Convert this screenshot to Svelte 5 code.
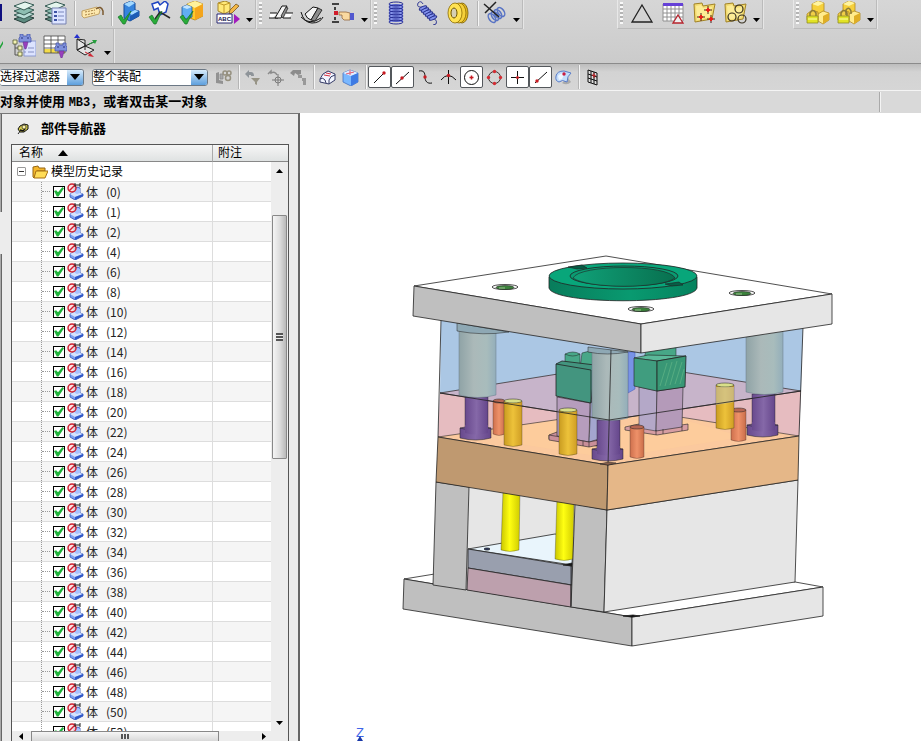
<script lang="ts">
	const bodies = [0, 1, ...Array.from({ length: 26 }, (_, i) => (i + 1) * 2)];

	let checked = $state(bodies.map(() => true));
	let filter = $state('选择过滤器');
	let scope = $state('整个装配');

	const holes = [
		[505, 287],
		[742, 293],
		[641, 309]
	];

	const goldPins = [
		[504, 401, 44],
		[559, 410, 44],
		[716, 385, 43]
	];

	const redPins = [
		[493, 401, 33, 12],
		[630, 427, 30, 14],
		[731, 410, 30, 15]
	];

	const guides = [
		{ x: 459, top: 327, w: 37, h: 68, px: 465, py: 397, ph: 35 },
		{ x: 592, top: 350, w: 36, h: 68, px: 597, py: 420, ph: 33 },
		{ x: 746, top: 330, w: 37, h: 62, px: 752, py: 394, ph: 35 }
	];
</script>

{#snippet more()}
	<button class="more" aria-label="More"><svg width="7" height="4" viewBox="0 0 7 4"><path d="M0 0h7L3.500 4z" /></svg></button>
{/snippet}

{#snippet layers()}
	<path d="M2 18l11-4 9 3-10 5z" fill="#5d8b80" stroke="#253c39" />
	<path d="M2 14l11-4 9 3-10 5z" fill="#b9ddd7" stroke="#365b54" />
	<path d="M2 10l11-4 9 3-10 5z" fill="#8dbeb2" stroke="#365b54" />
	<path d="M2 5l11-4 9 3-10 5z" fill="#e4f5ee" stroke="#365b54" />
{/snippet}

{#snippet folder()}
	<path d="M2 3l8-1 1 3 12-2-3 15-17 3z" fill="#f3dc72" stroke="#a28326" />
	<path d="M4 5l5-1 2 3 9-1-2 10-13 3z" fill="#fff2a5" opacity=".7" />
{/snippet}

{#snippet cubes()}
	<path d="M6 3l6-3 6 2v8l-6 4-6-3z" fill="#f6d03c" stroke="#b08a22" stroke-width=".8" />
	<path d="M6 3l6 2 6-3-6-2z" fill="#fff4a0" />
	<path d="M12 13l5-3 6 2v7l-6 4-5-3z" fill="#ffeb8c" stroke="#b08a22" stroke-width=".8" />
	<path d="M17 15l6-3v7l-6 4z" fill="#dfae25" />
	<path d="M1 13l5-4 6 2v8H1z" fill="#f0ce48" stroke="#b08a22" stroke-width=".8" />
	<path d="M4 15v-3q3-5 6 0v3" fill="none" stroke="#8b7a37" stroke-width="1.500" />
	<path d="M1 15h11v7H1z" fill="#e2e325" stroke="#8f8e26" stroke-width=".8" />
	<path d="M2 18h9" stroke="#fbffaf" />
{/snippet}

{#snippet tick()}
	<path d="M1 16l3-2 3 5 7-9-6 13H6z" fill="#29ac38" stroke="#16732a" stroke-width=".7" />
{/snippet}

{#snippet clamp()}
	<path d="M8 0h3v2h4V0h3v3l1 1v4H7V4l1-1z" fill="#7f91dc" stroke="#4a58ab" stroke-width=".8" />
	<path d="M9 4h2M15 4h2" stroke="#27307d" />
	<path d="M11 8h5l-1 4-1 3h-1l-1-3z" fill="#9a3fbe" stroke="#6a3494" stroke-width=".6" />
{/snippet}

{#snippet bodyIcon()}
	<svg class="body-icon" width="17" height="17" viewBox="0 0 17 17">
		<path d="M3 11l4-2V5l4-1 2 1v5l3 1v2l-8 4-5-3z" fill="#7ea0f2" stroke="#2f50b4" stroke-width=".8" />
		<path d="M3 11l4-2 3 1 3 0 3 1-8 3z" fill="#d6e4ff" />
		<path d="M8 6l3-1 2 1v4l-3 1-2-1z" fill="#a7c3ff" />
		<path d="M8 14l8-3v2l-8 4z" fill="#3158c8" />
		<circle cx="5" cy="5" r="4" fill="#f8dde0" fill-opacity=".8" stroke="#d32231" stroke-width="1.500" />
		<path d="M2 8l6-6" stroke="#d32231" stroke-width="1.500" />
		<path d="M8 2h5M8 0v4M13 0v4" stroke="#202020" />
	</svg>
{/snippet}

<div class="app">
	<header class="toolbars">
		<div class="toolbar">
			<div class="group first">
				<span class="sliver"><svg width="3" height="18" viewBox="0 0 3 18"><path d="M0 1h2M1 1v15M0 16h2" stroke="#101080" stroke-width="2" /></svg></span>
				<button aria-label="Layer settings"><svg width="24" height="24" viewBox="0 0 24 24">{@render layers()}</svg></button>
				<button aria-label="Layer categories">
					<svg width="24" height="24" viewBox="0 0 24 24">
						{@render layers()}
						<path d="M9 7h14v16H9z" fill="#dce4ff" stroke="#7681b1" />
						<path d="M11 10h3v2h-3zM11 14h3v2h-3zM11 18h3v2h-3z" fill="#3d53a5" />
						<path d="M15 11h6M15 15h6M15 19h6" stroke="#7885bb" />
					</svg>
				</button>
				<span class="sep"></span>
				<button aria-label="Name tag">
					<svg width="24" height="24" viewBox="0 0 24 24">
						<path d="M2 10l15-4 3 3-1 4-15 4-2-2z" fill="#fde8ae" stroke="#b8934f" stroke-width=".8" />
						<path d="M5 11l10-2M5 14l10-2" stroke="#a88345" stroke-dasharray="2 1" />
						<path d="M16 8q5-4 7 2v4" fill="none" stroke="#7b5a30" stroke-width="1.500" />
					</svg>
				</button>
				<span class="sep"></span>
				<button aria-label="Extrude body">
					<svg width="24" height="24" viewBox="0 0 24 24">
						<path d="M7 3l7-3 4 2v7l4 1v5l-9 5-6-3z" fill="#3684dd" stroke="#174a96" />
						<path d="M7 3l7-3 4 2-6 4zM12 12l6-3 4 1-7 4z" fill="#a4d9ff" />
						<path d="M13 15l9-5v5l-9 5z" fill="#1c5cb5" />
						{@render tick()}
					</svg>
				</button>
				<button aria-label="Sketch profile">
					<svg width="24" height="24" viewBox="0 0 24 24">
						<path d="M4 3l6-2 2 3 5-4 3 3-2 8-6 3-2-7-4 2z" fill="#fff" stroke="#1f44c2" stroke-width="1.500" />
						<path d="M7 18l5-7 10 6" fill="none" stroke="#282828" stroke-width="1.500" />
						{@render tick()}
					</svg>
				</button>
				<button aria-label="Wrap block">
					<svg width="24" height="24" viewBox="0 0 24 24">
						<path d="M8 3l8-3 8 3v12l-8 4-8-3z" fill="#ffc928" stroke="#b0801c" stroke-width=".8" />
						<path d="M8 3l8-3 8 3-8 4z" fill="#fff19b" />
						<path d="M16 7l8-4v12l-8 4z" fill="#f4a51c" />
						<path d="M3 6l5-2 5 2v10l-5 2-5-2z" fill="#61aef2" stroke="#1e5699" stroke-width=".8" />
						<path d="M3 6l5-2 5 2-5 2z" fill="#c4e5ff" />
						{@render tick()}
					</svg>
				</button>
				<span class="sep"></span>
				<button aria-label="Edit text feature">
					<svg width="24" height="24" viewBox="0 0 24 24">
						<path d="M2 2l7-2 5 2v8l-6 3-6-3z" fill="#ffe979" stroke="#a3852a" />
						<path d="M2 2l6 2 6-2M8 4v8" fill="none" stroke="#c49a28" />
						<path d="M20 3l3 2-7 7-3 1 1-4z" fill="#f3b847" stroke="#78551d" stroke-width=".8" />
						<path d="M1 13h15v9H1z" fill="#fff" stroke="#282872" />
						<text x="2" y="20" font-size="6" font-weight="700" fill="#161650">ABC</text>
						<path d="M18 13l6 5-6 5z" fill="#a21bbd" />
					</svg>
				</button>
				{@render more()}
			</div>

			<div class="group">
				<span class="grip"></span>
				<button aria-label="Bend sheet">
					<svg width="24" height="24" viewBox="0 0 24 24">
						<path d="M1 12h7l-4 5H1zM16 12h8l-4 5h-7z" fill="#fff" />
						<path d="M1 12h7M0 17h9M17 12h7M14 17h8" stroke="#111" />
						<path d="M6 17l7-12h5l-6 12z" fill="#f4f4f4" stroke="#111" />
						<path d="M12 15l5-9 2 1-5 10z" fill="#8c8c8c" stroke="#111" stroke-width=".7" />
					</svg>
				</button>
				<button aria-label="Bend curved sheet">
					<svg width="24" height="24" viewBox="0 0 24 24">
						<path d="M1 11q3 11 11 11 8 0 11-6M1 16q8 9 20 1" fill="none" stroke="#111" />
						<path d="M5 13l8-7 5 1-7 12q-4-1-6-6z" fill="#f4f4f4" stroke="#111" />
						<path d="M11 19l7-12 4 2-7 11z" fill="#8c8c8c" stroke="#111" stroke-width=".8" />
					</svg>
				</button>
				<button aria-label="Pick station">
					<svg width="24" height="24" viewBox="0 0 24 24">
						<path d="M1 3h7M1 21h7" stroke="#111" stroke-width="1.500" />
						<path d="M4 6v14" stroke="#111" stroke-width="1.500" stroke-dasharray="3 2" />
						<path d="M3 10h4v4H3z" fill="#d11d2c" />
						<path d="M8 11h7l4 1v7h-6l-2-2v-3H8z" fill="#f9d9a0" stroke="#94683d" stroke-width=".8" />
						<path d="M19 12h4v7h-4z" fill="#5258cf" />
					</svg>
				</button>
				{@render more()}
			</div>

			<div class="group">
				<span class="grip"></span>
				<button aria-label="Coil spring">
					<svg width="24" height="24" viewBox="0 0 24 24">
						<path d="M5 3h14v18H5z" fill="#8896ec" />
						{#each [3, 6, 9, 12, 15, 18, 21] as y}
							<ellipse cx="12" cy={y} rx="7" ry="2" fill="none" stroke="#272e94" />
						{/each}
					</svg>
				</button>
				<button aria-label="Tension spring">
					<svg width="24" height="24" viewBox="0 0 24 24">
						<path d="M8 6Q1 7 3 2q3-3 5 1M17 18q6 0 4 5l-3 1" fill="none" stroke="#353d95" />
						{#each [0, 1, 2, 3, 4, 5] as i}
							<ellipse cx={8 + i * 2} cy={7 + i * 2} rx="4" ry="1.500" transform="rotate(-25 {8 + i * 2} {7 + i * 2})" fill="#8292ee" stroke="#262f8b" />
						{/each}
					</svg>
				</button>
				<button aria-label="Die ring">
					<svg width="24" height="24" viewBox="0 0 24 24">
						<ellipse cx="16" cy="12" rx="6" ry="10" fill="#e6bb22" stroke="#765b00" stroke-width=".8" />
						<ellipse cx="13" cy="12" rx="7" ry="10" fill="#f5d03a" stroke="#8b6b00" stroke-width=".8" />
						<ellipse cx="9" cy="12" rx="7" ry="10" fill="#ffe252" stroke="#8b6b00" stroke-width=".8" />
						<ellipse cx="8" cy="12" rx="3" ry="5" fill="#d6d0b4" stroke="#6f5600" />
					</svg>
				</button>
				<span class="sep"></span>
				<button aria-label="Delete spring">
					<svg width="24" height="24" viewBox="0 0 24 24">
						{#each [0, 1, 2, 3] as i}
							<ellipse cx={9 + i * 3} cy={17 - i * 2} rx="3" ry="5" transform="rotate(-35 {9 + i * 3} {17 - i * 2})" fill="none" stroke="#5873c4" stroke-width="1.500" />
						{/each}
						<path d="M1 3l15 13M13 1L2 12" stroke="#222" stroke-width="1.500" />
					</svg>
				</button>
				{@render more()}
			</div>

			<div class="group points">
				<span class="grip"></span>
				<button aria-label="Triangle"><svg width="24" height="24" viewBox="0 0 24 24"><path d="M12 4l10 17H2z" fill="none" stroke="#222" stroke-width="1.300" /></svg></button>
				<button aria-label="Point table">
					<svg width="24" height="24" viewBox="0 0 24 24">
						<path d="M2 3h20v17H2z" fill="#fff" stroke="#909090" />
						<path d="M6 5v15M10 5v15M14 5v15M18 5v15M2 8h20M2 12h20M2 16h20" stroke="#909090" />
						<path d="M2 2h20v3H2z" fill="#6541d7" />
						<path d="M17 14l5 8H12z" fill="#efefef" stroke="#b6232d" stroke-width="1.300" />
					</svg>
				</button>
				<button aria-label="Point folder">
					<svg width="24" height="24" viewBox="0 0 24 24">
						{@render folder()}
						<path d="M12 9h8M16 5v8M5 16h8M9 12v8M15 18h8M19 14v8" stroke="#4a1c16" />
						<path d="M14 9h4M16 7v4M7 16h4M9 14v4M17 18h4M19 16v4" stroke="#e81e18" stroke-width="2" />
					</svg>
				</button>
				<button aria-label="Hole folder">
					<svg width="24" height="24" viewBox="0 0 24 24">
						{@render folder()}
						<g fill="none" stroke="#383120" stroke-width="1.200"><circle cx="16" cy="8" r="4" /><circle cx="9" cy="16" r="4" /><circle cx="19" cy="18" r="4" /></g>
					</svg>
				</button>
				{@render more()}
			</div>

			<div class="group locks">
				<span class="grip"></span>
				<button aria-label="Lock assembly"><svg width="24" height="24" viewBox="0 0 24 24">{@render cubes()}</svg></button>
				<button aria-label="Unlock assembly">
					<svg width="24" height="24" viewBox="0 0 24 24">
						{@render cubes()}
						<path d="M9 14V9q3-4 5 1v3" fill="none" stroke="#8b7a37" stroke-width="1.500" />
					</svg>
				</button>
				{@render more()}
			</div>
		</div>

		<div class="toolbar second">
			<div class="group first">
				<span class="sliver"><svg width="3" height="12" viewBox="0 0 3 12"><path d="M0 6l3-5v3L0 9z" fill="#1fa339" /></svg></span>
				<button aria-label="Clamp tree">
					<svg width="24" height="24" viewBox="0 0 24 24">
						<path d="M3 10v11h4M3 14h4" fill="none" stroke="#555" />
						<path d="M1 6h4v4H1zM6 12h4v4H6zM6 18h4v4H6z" fill="#f3f3b4" stroke="#555a35" stroke-width=".8" />
						<path d="M12 7h12v15H12z" fill="#dce3ff" stroke="#8d9ad0" />
						<path d="M12 14h2M16 14h6M12 18h2M16 18h6" stroke="#8590c4" />
						{@render clamp()}
					</svg>
				</button>
				<button aria-label="Clamp table">
					<svg width="24" height="24" viewBox="0 0 24 24">
						<path d="M1 2h21v17H1z" fill="#fff" />
						<path d="M1 15h21v4H1z" fill="#f4dc4a" />
						<path d="M1 2v17M8 2v17M15 2v17M22 2v17M1 2h21M1 6h21M1 10h21M1 14h21M1 19h21" stroke="#444" stroke-width=".8" />
						<g transform="translate(5 9)">{@render clamp()}</g>
					</svg>
				</button>
				<button aria-label="Coordinate planes">
					<svg width="24" height="24" viewBox="0 0 24 24">
						<path d="M3 5v11l8-4V6zM3 16l8-4 9 4-9 5z" fill="#eee" fill-opacity=".7" stroke="#222" />
						<path d="M3 5l8 5v6M11 12l9-4" fill="none" stroke="#222" />
						<path d="M3 0L0 4h6z" fill="#2631d1" /><path d="M23 6l-5 0 3 4z" fill="#25a03c" /><path d="M20 23l-6-1 2-3z" fill="#d02532" />
						<path d="M15 10l5-2" stroke="#25a03c" />
						<path d="M11 18l6 3" stroke="#d02532" />
					</svg>
				</button>
				{@render more()}
			</div>
		</div>

		<div class="selection-bar">
			<label class="combo filter">
				<select bind:value={filter} aria-label="Selection filter"><option>选择过滤器</option></select>
				<span class="drop"><svg width="10" height="6" viewBox="0 0 10 6"><path d="M0 0h10L5 6z" /></svg></span>
			</label>
			<label class="combo scope">
				<select bind:value={scope} aria-label="Selection scope"><option>整个装配</option></select>
				<span class="drop"><svg width="10" height="6" viewBox="0 0 10 6"><path d="M0 0h10L5 6z" /></svg></span>
			</label>
			<button class="after-combo" aria-label="Linked parts">
				<svg width="17" height="17" viewBox="0 0 17 17"><path d="M1 4l3-1v8l4 1v3l-7-1z" fill="#929292" /><path d="M5 5h3v5H5z" fill="#a8a8a8" stroke="#888" stroke-width=".8" /><g fill="none" stroke="#969180" stroke-width="1.500"><circle cx="10" cy="4" r="2" /><circle cx="14" cy="4" r="2" /><circle cx="13" cy="9" r="2.500" /></g></svg>
			</button>
			<span class="sep"></span>
			<button aria-label="Undo filter">
				<svg width="17" height="17" viewBox="0 0 17 17"><path d="M1 5l4-4v2h2q3 0 3 4H7V6H5v3z" fill="#8e9499" /><path d="M7 9h9l-3 4v3l-2-1v-2z" fill="#979486" /></svg>
			</button>
			<button aria-label="Undo point">
				<svg width="17" height="17" viewBox="0 0 17 17"><path d="M1 5l3-3v2q4-2 6 2" fill="none" stroke="#8b8b8b" stroke-width="1.500" /><path d="M5 11h12M11 5v12" stroke="#7b7b7b" /><circle cx="11" cy="11" r="3" fill="none" stroke="#7b7b7b" /></svg>
			</button>
			<button aria-label="Undo chain">
				<svg width="17" height="17" viewBox="0 0 17 17"><path d="M0 4l3-3h8v4l-3 1-3-2-1 3z" fill="#8c8c8c" /><path d="M8 6h4v3H8zM12 9h4v7h-3v-4h-1z" fill="#999" /></svg>
			</button>
			<span class="sep"></span>
			<button aria-label="Face selection">
				<svg width="17" height="17" viewBox="0 0 17 17"><path d="M1 10l3-5 5-3 7 3v6l-6 4-9-2z" fill="#f3f6ff" stroke="#363c67" /><path d="M1 10q3-2 5 1l1 3M10 15v-4q1-4 6-5" fill="none" stroke="#363c67" /><path d="M5 6l6 1M7 4l5 1" stroke="#d53242" /></svg>
			</button>
			<button aria-label="Body selection">
				<svg width="17" height="17" viewBox="0 0 17 17"><path d="M1 4l7-3 8 3v9l-7 4-8-4z" fill="#7ab8ff" stroke="#4170c2" stroke-width=".8" /><path d="M1 4l8 3 7-3-8-3z" fill="#e3ecff" /><path d="M9 7l7-3v9l-7 4z" fill="#3f7be4" /><path d="M4 5l8-2M8 1v5" fill="none" stroke="#e15b70" /></svg>
			</button>
			<span class="sep"></span>
			<button class="on" aria-label="End point"><svg width="17" height="17" viewBox="0 0 17 17"><path d="M3 14L13 4" stroke="#111" /><circle cx="13" cy="4" r="1.700" fill="#c81c22" /></svg></button>
			<button class="on" aria-label="Mid point"><svg width="17" height="17" viewBox="0 0 17 17"><path d="M2 15L15 3" stroke="#111" /><circle cx="8" cy="9" r="1.700" fill="#c81c22" /></svg></button>
			<button aria-label="Control point"><svg width="17" height="17" viewBox="0 0 17 17"><path d="M2 2c5-1 6 2 6 6s2 7 7 6" fill="none" stroke="#111" /><circle cx="8" cy="8" r="1.700" fill="#c81c22" /></svg></button>
			<button aria-label="Intersection"><svg width="17" height="17" viewBox="0 0 17 17"><path d="M1 11q7-9 15 0M8.500 1v14" fill="none" stroke="#111" /><circle cx="8.500" cy="6.500" r="1.700" fill="#c81c22" /></svg></button>
			<button class="on" aria-label="Arc center"><svg width="17" height="17" viewBox="0 0 17 17"><circle cx="8.500" cy="8.500" r="7" fill="none" stroke="#111" /><path d="M6.500 8.500h4M8.500 6.500v4" stroke="#c81c22" stroke-width="1.500" /></svg></button>
			<button aria-label="Quadrant point"><svg width="17" height="17" viewBox="0 0 17 17"><circle cx="8.500" cy="8.500" r="6" fill="none" stroke="#3c3030" /><g fill="#d42c33"><circle cx="8.500" cy="2.500" r="1.700" /><circle cx="14.500" cy="8.500" r="1.700" /><circle cx="8.500" cy="14.500" r="1.700" /><circle cx="2.500" cy="8.500" r="1.700" /></g></svg></button>
			<button class="on" aria-label="Existing point"><svg width="17" height="17" viewBox="0 0 17 17"><path d="M2 8.500h13M8.500 2v13" stroke="#111" /><circle cx="8.500" cy="8.500" r="1.500" fill="#c81c22" /></svg></button>
			<button class="on" aria-label="Point on curve"><svg width="17" height="17" viewBox="0 0 17 17"><path d="M3 14L15 3" stroke="#111" /><circle cx="5" cy="12" r="1.700" fill="#c81c22" /></svg></button>
			<button aria-label="Point on face"><svg width="17" height="17" viewBox="0 0 17 17"><path d="M7 14q5 3 9-1l-3-4z" fill="#aaa" /><path d="M1 7q1-5 8-5l7 2q-4 3-4 9-5-3-8 0Q0 12 1 7z" fill="#c3ddfb" stroke="#5a7dc9" /><path d="M3 7q2-3 7-3l-3 6-3 1z" fill="#eef6ff" /><circle cx="9" cy="5" r="1.700" fill="#c81c42" /></svg></button>
			<span class="sep"></span>
			<button aria-label="Snap grid"><svg width="17" height="17" viewBox="0 0 17 17"><path d="M4 1l9 3v12l-9-3z" fill="#ddd" stroke="#111" /><path d="M7 2v12M10 3v12M4 5l9 3M4 9l9 3" stroke="#111" /><path d="M8 6l4 1M10 4v5" stroke="#c81c22" /></svg></button>
		</div>

		<div class="status">
			<p>对象并使用 <span>MB3</span>，或者双击某一对象</p>
			<div class="status-end"></div>
		</div>
	</header>

	<main>
		<aside>
			<div class="dock"><span></span><span></span></div>
			<section class="navigator">
				<h1>
					<svg width="12" height="12" viewBox="0 0 12 12"><path d="M1 11l3-4" stroke="#222" /><path d="M3 3l4-2 4 1v4L7 9H3L1 6z" fill="#d3ca48" stroke="#111" /><path d="M3 7l3 1 2-2" fill="none" stroke="#111" stroke-width="1.500" /><circle cx="7" cy="4" r="2" fill="#fff5a8" stroke="#333" stroke-width=".8" /></svg>
					部件导航器
				</h1>
				<div class="tree">
					<table>
						<thead>
							<tr>
								<th class="name">名称 <svg width="10" height="6" viewBox="0 0 10 6"><path d="M0 6h10L5 0z" /></svg></th>
								<th>附注</th>
							</tr>
						</thead>
						<tbody>
							<tr>
								<td>
									<div class="root">
										<button class="expander" aria-label="Collapse"></button>
										<svg width="16" height="14" viewBox="0 0 16 14"><path d="M1 2l5-1 1 2h6v3H5l-3 7-1-1z" fill="#f4b62b" stroke="#946514" /><path d="M4 6h12l-3 7H2z" fill="#ffdc57" stroke="#a56f15" /></svg>
										模型历史记录
									</div>
								</td>
								<td></td>
							</tr>
							{#each bodies as id, i}
								<tr>
									<td>
										<label class="leaf">
											<input type="checkbox" bind:checked={checked[i]} />
											{@render bodyIcon()}
											<span class="kind">体</span>
											<span>({id})</span>
										</label>
									</td>
									<td></td>
								</tr>
							{/each}
						</tbody>
					</table>
					<div class="scroll-y">
						<svg width="7" height="4" viewBox="0 0 7 4"><path d="M0 4h7L3.500 0z" /></svg>
						<div class="thumb"><i></i></div>
						<svg width="7" height="4" viewBox="0 0 7 4"><path d="M0 0h7L3.500 4z" /></svg>
					</div>
					<div class="scroll-x">
						<svg width="4" height="7" viewBox="0 0 4 7"><path d="M4 0v7L0 3.500z" /></svg>
						<div class="thumb"><i></i></div>
						<svg width="4" height="7" viewBox="0 0 4 7"><path d="M0 0v7l4-3.500z" /></svg>
					</div>
				</div>
			</section>
		</aside>

		<section class="viewport">
			<svg viewBox="300 113 621 628" role="img" aria-label="Mold assembly">
				<defs>
					<linearGradient id="bush"><stop offset="0" stop-color="#8fa3a6" /><stop offset=".4" stop-color="#abb9b9" /><stop offset=".75" stop-color="#a8bcbc" /><stop offset="1" stop-color="#93aeba" /></linearGradient>
					<linearGradient id="purple"><stop offset="0" stop-color="#68498d" /><stop offset=".5" stop-color="#8568a8" /><stop offset="1" stop-color="#65468b" /></linearGradient>
					<linearGradient id="gold"><stop offset="0" stop-color="#c99b20" /><stop offset=".5" stop-color="#edc23a" /><stop offset="1" stop-color="#cf9d24" /></linearGradient>
					<linearGradient id="red"><stop offset="0" stop-color="#ce704d" /><stop offset=".5" stop-color="#ee9169" /><stop offset="1" stop-color="#c96d49" /></linearGradient>
					<linearGradient id="yellow"><stop offset="0" stop-color="#c9c500" /><stop offset=".45" stop-color="#ffff12" /><stop offset="1" stop-color="#d0cb00" /></linearGradient>
					<linearGradient id="ring"><stop offset="0" stop-color="#087c5b" /><stop offset=".55" stop-color="#099a70" /><stop offset="1" stop-color="#05825e" /></linearGradient>
					<linearGradient id="bore"><stop offset="0" stop-color="#10a178" /><stop offset="1" stop-color="#08704f" /></linearGradient>
				</defs>

				<g class="edges">
					<!-- base plate and spacer blocks -->
					<path d="M404 579l196-32 223 40-191 30z" fill="#fff" />
					<path d="M404 579l228 38v29l-229-37z" fill="#bfbfbf" />
					<path d="M632 617l191-30v29l-191 30z" fill="#e6e6e6" />
					<path d="M468 485l107 19-3 103-106-18z" fill="#e6e6e6" stroke="none" />
					<path d="M468 549l87-15 18 3-1 28z" fill="#e9f5fc" />
					<path d="M468 549l104 17v19l-104-17z" fill="#999fae" />
					<path d="M468 568l103 17v22l-104-17z" fill="#bda0ad" />
					<ellipse cx="487" cy="549" rx="3" ry="1" fill="#24346f" />
					<path d="M503 490h17l-1 60q-9 3-18 0z" fill="url(#yellow)" stroke-width=".3" />
					<path d="M557 498h17l-1 61q-9 3-18 0z" fill="url(#yellow)" stroke-width=".3" />
					<path d="M563 565l9-2v3z" fill="#111" />
					<path d="M436 482l33 5-3 103-33-5z" fill="#bfbfbf" />
					<path d="M575 504l32 6-3 102-33-5z" fill="#bfbfbf" />
					<path d="M607 510l191-30-3 102-191 30z" fill="#e6e6e6" />
					<path d="M571 564v42M623 616l10-1 7 1-8 1z" />

					<!-- cavity plates -->
					<path d="M441 318l170 28 192-19-2 64-2 45-191 29-170-28 2-44z" fill="#abc7e4" stroke="none" />
					<path d="M440 393l186-30 175 28-2 45-191 29-170-28z" fill="#e6bcc0" stroke="none" />
					<path d="M438 437l192-28 169 27-191 29z" fill="#fbc99e" stroke-width=".6" />
					<path d="M490 430l80-11 49 7 55-9 69 20-134 21-109-17z" fill="#ffd09a" stroke="none" opacity=".5" />
					<path d="M440 393l186-30 175 28-192 29z" fill="#c7b4ca" stroke-width=".7" />

					<!-- inserts -->
					<path d="M628 352h7v37l-7 4z" fill="#7893e7" stroke="#4056b4" stroke-width=".5" />
					<path d="M549 435l8-3 40 5v9l-48-7z" fill="#c98f99" stroke-width=".6" />
					<path d="M557 397l33 6-1 39-32-6z" fill="#b69dbd" stroke-width=".6" />
					<path d="M591 401h8v38l-10 3z" fill="#a4a5cf" stroke-width=".5" />
					<path d="M549 435l40 7 10-2v5l-10 2-40-7zM564 438v5M583 441v5M589 442v5" fill="#c98f99" stroke-width=".6" />
					<path d="M625 427l14-3 17 5 32-5v6l-31 5-32-5z" fill="#d69da2" stroke-width=".6" />
					<path d="M639 387l18 4-1 40-17-3z" fill="#b4a8c8" stroke-width=".5" />
					<path d="M657 391l26-4-1 40-26 4z" fill="#b49ab9" stroke-width=".6" />
					<path d="M656 430v5M663 429v5M682 426v5" fill="none" stroke-width=".6" />
					<path d="M565 354q8-4 15 0v15h-15zM582 353q6-3 12 0v15h-14z" fill="#48a788" stroke-width=".5" />
					<path d="M565 354q8 4 15 0" fill="none" stroke-width=".5" />
					<path d="M556 364l6-3 33 4-4 38-35-7z" fill="#43957f" />
					<path d="M556 364l35 6v33" fill="none" />
					<path d="M646 350l30-5v13l-20 3-12-2z" fill="#47a787" stroke-width=".5" />
					<path d="M634 358l14-3 38 1-29 5z" fill="#5bb999" stroke-width=".6" />
					<path d="M634 358l23 3v30l-23-5z" fill="#409d7f" stroke-width=".6" />
					<path d="M657 361l29-5-1 31-28 4z" fill="#399775" />
					<path d="M660 386l7-23M665 386l7-24M670 385l7-24M675 384l7-22M680 384l4-15" stroke="#62b486" stroke-width=".7" />

					<!-- pins and guide pillars -->
					{#each redPins as [x, y, h, w]}
						<path d="M{x} {y}h{w}v{h}q{-w / 2} 3 {-w} 0z" fill="url(#red)" stroke-width=".3" />
						<ellipse cx={x + w / 2} cy={y} rx={w / 2} ry="2" fill="#b76753" stroke-width=".5" />
					{/each}
					{#each goldPins as [x, y, h]}
						<path d="M{x} {y}h18v{h}q-9 3-18 0z" fill="url(#gold)" stroke-width=".3" />
						<ellipse cx={x + 9} cy={y} rx="9" ry="2" fill="#d9df89" stroke-width=".5" />
					{/each}
					<path d="M716 387h18v15l-18 3z" fill="#c9c3a1" opacity=".65" stroke="none" />
					{#each guides as g}
						<path d="M{g.px} {g.py}h23v{g.ph}h-23z" fill="url(#purple)" stroke-width=".4" />
						<path d="M{g.px - 5} {g.py + g.ph - 4}q16-4 31 0v10q-15 4-31 0z" fill="url(#purple)" stroke-width=".5" />
						<path d="M{g.px - 5} {g.py + g.ph - 4}q16 5 31 0" fill="none" stroke-width=".5" />
						<path d="M{g.px} {g.py + g.ph - 7}h23v8q-12 3-23 0z" fill="url(#purple)" stroke="none" />
						<path d="M{g.x} {g.top}h{g.w}v{g.h}q{-g.w / 2} 5 {-g.w} 0z" fill="url(#bush)" stroke="#69798a" stroke-width=".5" />
					{/each}
					<path d="M457 323l52 9q-26 4-52-1zM588 347l40 5q-21 4-40 0z" fill="#8ea8b4" stroke-width=".5" />
					<path d="M440 393l169 27 192-29" fill="none" />
					<path d="M441 320l-3 117M611 350l-3 115M803 327l-4 109" fill="none" />

					<!-- support plate -->
					<path d="M438 437l170 28-1 45-171-28z" fill="#bf9970" />
					<path d="M608 465l191-29-1 44-191 30z" fill="#e5b788" />
					<path d="M600 464l8-2 8 1-8 2z" fill="#875f4c" stroke-width=".5" />

					<!-- top clamping plate -->
					<path d="M414 286l192-30 226 38-191 30z" fill="#fff" />
					<path d="M414 286l227 38v29l-228-37z" fill="#bfbfbf" />
					<path d="M641 324l191-30v30l-191 29z" fill="#e6e6e6" />
					{#each holes as [x, y]}
						<ellipse cx={x} cy={y} rx="13" ry="2.500" fill="#fff" stroke-width=".8" />
						<ellipse cx={x} cy={y + 0.5} rx="9" ry="2" fill="#3c833c" stroke-width=".6" />
						<path d="M{x - 6} {y + 1}h6" stroke="#b7d6aa" />
					{/each}
					<path d="M549 277v11c4 17 144 17 148 0v-11z" fill="url(#ring)" />
					<ellipse cx="623" cy="276" rx="74" ry="13" fill="#08a67a" />
					<ellipse cx="624" cy="276" rx="54" ry="10" fill="#0a9b72" />
					<path d="M573 278c6-14 96-14 102 0-14 11-87 11-102 0z" fill="url(#bore)" stroke-width=".6" />
					<path d="M568 267l14-2 5 3-10 1zM665 284l14-2 4 3-11 1z" fill="#075d46" stroke-width=".6" />
				</g>
				<text x="356" y="737" font-size="13" fill="#3f65e8">Z</text>
				<path d="M360 736l3 5h-6z" fill="#1938a7" />
			</svg>
		</section>
	</main>
</div>

<style>
	:global(body) {
		margin: 0;
	}

	.app {
		display: flex;
		flex-direction: column;
		height: 100vh;
		overflow: hidden;
		background: #fff;
		color: #000;
		font-family: 'Liberation Sans', 'Noto Sans CJK SC', sans-serif;
		font-size: 12px;
		line-height: 16px;
	}

	svg {
		display: block;
		flex: none;
	}

	button {
		display: flex;
		align-items: center;
		justify-content: center;
		flex: none;
		box-sizing: border-box;
		margin: 0;
		padding: 0;
		border: 0;
		background: none;
	}

	.toolbars {
		flex: none;
		background: linear-gradient(#d6d6d6, #cbcbcb 63px, #d9d9d9);
	}

	.toolbar {
		display: flex;
		height: 29px;
	}

	.toolbar.second {
		height: 34px;
	}

	.group {
		display: flex;
		align-items: center;
		box-sizing: border-box;
		padding-bottom: 2px;
		border-right: 1px solid #bbb;
		border-bottom: 1px solid #bbb;
		box-shadow: 1px 0 #e6e6e6;
	}

	.second .group {
		padding: 0;
		border-bottom: 0;
	}

	.group:not(.first) {
		margin-left: 1px;
	}

	.group.points {
		margin-left: 94px;
		border-left: 1px solid #e8e8e8;
	}

	.group.locks {
		margin-left: 30px;
		border-left: 1px solid #e8e8e8;
	}

	.group button {
		width: 31px;
		height: 26px;
	}

	.group .more {
		width: 12px;
		padding-top: 14px;
	}

	.sliver {
		width: 8px;
	}

	.grip {
		box-sizing: border-box;
		width: 8px;
		height: 22px;
		padding: 0 3px 0 2px;
		background: repeating-linear-gradient(#f8f8f8 0 2px, #b4b4b4 2px 4px) content-box;
	}

	.sep {
		flex: none;
		width: 1px;
		height: 25px;
		margin-left: 4px;
		border-right: 1px solid #f5f5f5;
		background: #b5b5b5;
	}

	.selection-bar {
		display: flex;
		align-items: center;
		box-sizing: border-box;
		height: 27px;
		border-top: 1px solid #8b8b8b;
		background: linear-gradient(#bdbdbd, #d3d3d3 8px, #d6d6d6);
	}

	.selection-bar button {
		width: 23px;
		height: 22px;
	}

	.selection-bar .sep {
		margin: 0 1px 0 3px;
		height: 24px;
	}

	.selection-bar .on {
		border: 1px solid #54585c;
		border-radius: 2px;
		background: #fff;
	}

	.combo {
		display: flex;
		box-sizing: border-box;
		height: 17px;
		border: 1px solid #6b7885;
		border-radius: 3px;
		background: #fff;
		overflow: hidden;
	}

	.combo.filter {
		width: 84px;
		border-left: 0;
	}

	.combo.scope {
		width: 116px;
		margin-left: 8px;
	}

	.combo select {
		flex: 1;
		min-width: 0;
		padding: 0;
		border: 0;
		appearance: none;
		background: none;
		color: #000;
		font: inherit;
		line-height: 15px;
	}

	.drop {
		display: flex;
		align-items: center;
		justify-content: center;
		width: 16px;
		background: linear-gradient(#d7ebfb, #5d9fdd);
		pointer-events: none;
	}

	.selection-bar .after-combo {
		margin-left: 4px;
	}

	.status {
		display: flex;
		align-items: center;
		height: 22px;
		border-top: 1px solid #f4f4f4;
		background: #d9d9d9;
	}

	.status p {
		flex: 1;
		margin: 0;
		font-size: 13px;
		font-weight: 700;
		white-space: pre;
	}

	.status span {
		font-family: 'Liberation Mono', monospace;
		font-size: 12px;
	}

	.status-end {
		width: 40px;
		height: 20px;
		border-left: 1px solid #f4f4f4;
		box-shadow: -1px 0 #aaa;
	}

	main {
		display: grid;
		grid-template-columns: 300px 1fr;
		flex: 1;
		min-height: 0;
	}

	aside {
		display: flex;
		box-sizing: border-box;
		min-height: 0;
		border-top: 1px solid #777;
		border-right: 2px solid #666;
		background: #ececec;
	}

	.dock {
		display: flex;
		flex-direction: column;
		gap: 42px;
		width: 2px;
	}

	.dock span {
		height: 98px;
		border-right: 1px solid #666;
		background: #aaa;
	}

	.dock span:last-child {
		flex: 1;
	}

	.navigator {
		display: flex;
		flex-direction: column;
		flex: 1;
		min-width: 0;
		padding: 0 9px;
	}

	h1 {
		display: flex;
		align-items: center;
		gap: 12px;
		height: 30px;
		margin: 0;
		padding-left: 6px;
		font-size: 13px;
		font-weight: 700;
	}

	.tree {
		position: relative;
		flex: 1;
		min-height: 0;
		border: 1px solid #555;
		border-bottom: 0;
		background: #fff;
		overflow: hidden;
	}

	table {
		width: 100%;
		table-layout: fixed;
		border-collapse: separate;
		border-spacing: 0;
	}

	th {
		box-sizing: border-box;
		height: 17px;
		padding: 0 0 0 5px;
		border-bottom: 1px solid #888;
		background: linear-gradient(#f6f6f6, #dfe2e2);
		font-weight: 400;
		line-height: 16px;
		text-align: left;
	}

	th.name {
		width: 201px;
		padding-left: 7px;
		border-right: 1px solid #aaa;
	}

	th svg {
		display: inline-block;
		margin-left: 12px;
		vertical-align: 1px;
	}

	td {
		box-sizing: border-box;
		height: 20px;
		padding: 0;
		border-bottom: 1px solid #ddd;
		line-height: 18px;
	}

	td:first-child {
		border-right: 1px solid #ddd;
	}

	tbody tr:nth-child(even) {
		background: #f5f5f5;
	}

	.root {
		display: flex;
		align-items: center;
		gap: 3px;
		height: 19px;
		padding-left: 5px;
	}

	.expander {
		width: 9px;
		height: 9px;
		margin-right: 3px;
		border: 1px solid #999;
		border-radius: 1px;
		background: linear-gradient(#333, #333) center / 5px 1px no-repeat #fff;
	}

	.leaf {
		display: flex;
		align-items: center;
		height: 19px;
		margin-left: 29px;
		border-left: 1px dotted #999;
	}

	.leaf::before {
		content: '';
		width: 8px;
		border-top: 1px dotted #999;
	}

	input {
		display: grid;
		place-items: center;
		flex: none;
		box-sizing: border-box;
		width: 12px;
		height: 12px;
		margin: 0 2px 0 3px;
		border: 1px solid #000;
		appearance: none;
		background: #fff;
	}

	input:checked::before {
		content: '';
		width: 10px;
		height: 10px;
		background: #1fb23b;
		clip-path: polygon(0 45%, 22% 38%, 40% 58%, 85% 5%, 100% 18%, 45% 100%, 28% 100%);
	}

	.kind {
		margin: 0 8px 0 2px;
	}

	.leaf span {
		font-family: 'Noto Sans CJK SC', sans-serif;
		color: #222;
	}

	.scroll-y {
		position: absolute;
		top: 17px;
		right: 0;
		bottom: 10px;
		display: flex;
		flex-direction: column;
		align-items: center;
		justify-content: space-between;
		box-sizing: border-box;
		width: 17px;
		padding: 7px 0 6px;
		background: #ededed;
	}

	.scroll-y .thumb {
		display: flex;
		align-items: center;
		justify-content: center;
		box-sizing: border-box;
		width: 15px;
		height: 44%;
		margin-bottom: 220px;
		border: 1px solid #888;
		border-radius: 1px;
		background: linear-gradient(90deg, #f5f5f5, #dedede 50%, #b9b9b9);
	}

	.scroll-y i {
		width: 7px;
		height: 8px;
		background: repeating-linear-gradient(#555 0 2px, #eee 2px 3px);
	}

	.scroll-x {
		position: absolute;
		right: 0;
		bottom: 0;
		left: 0;
		display: flex;
		align-items: center;
		box-sizing: border-box;
		height: 10px;
		padding: 0 22px 0 7px;
		background: #ededed;
	}

	.scroll-x .thumb {
		display: flex;
		align-items: center;
		justify-content: center;
		box-sizing: border-box;
		width: 188px;
		height: 10px;
		margin: 0 auto 0 8px;
		border: 1px solid #888;
		border-bottom: 0;
		background: linear-gradient(#f6f6f6, #d8d8d8);
	}

	.scroll-x i {
		width: 8px;
		height: 5px;
		background: repeating-linear-gradient(90deg, #555 0 2px, #eee 2px 3px);
	}

	.viewport {
		min-width: 0;
		min-height: 0;
		background: #fff;
	}

	.viewport svg {
		width: 100%;
		height: 100%;
	}

	.edges {
		stroke: #222;
		stroke-width: 0.8;
		stroke-linejoin: round;
	}
</style>
